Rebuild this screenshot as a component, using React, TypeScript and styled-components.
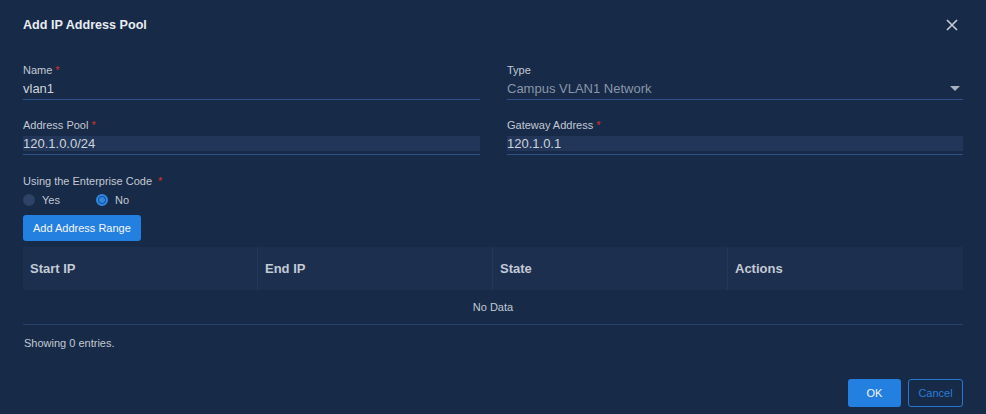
import styled, { createGlobalStyle } from 'styled-components';

const GlobalStyle = createGlobalStyle`
  html, body {
    margin: 0;
    padding: 0;
    background: #172a48;
  }
  body {
    font-family: "Liberation Sans", Arial, sans-serif;
    color: #c9ced8;
  }
`;

const Dialog = styled.div`
  width: 986px;
  height: 414px;
  box-sizing: border-box;
  padding: 0 23px;
  display: flex;
  flex-direction: column;
  background: #172a48;
`;

const Header = styled.div`
  height: 50px;
  display: flex;
  align-items: center;
  justify-content: space-between;
`;

const Title = styled.h2`
  margin: 0;
  font-size: 12.6px;
  font-weight: 700;
  color: #e9edf3;
`;

const CloseBtn = styled.button`
  border: 0;
  background: none;
  padding: 0;
  width: 14px;
  height: 14px;
  margin-right: 4px;
  cursor: pointer;
  display: flex;
  align-items: center;
  justify-content: center;
`;

const FormGrid = styled.div`
  display: grid;
  grid-template-columns: 457px 456px;
  column-gap: 27px;
  row-gap: 19px;
  padding-top: 14px;
`;

const Field = styled.div`
  display: flex;
  flex-direction: column;
`;

const Label = styled.label`
  font-size: 11px;
  line-height: 13px;
  color: #c3c9d3;
  margin-bottom: 4px;
`;

const Req = styled.span`
  color: #d9312b;
  margin-left: 3px;
`;

const InputWrap = styled.div`
  display: flex;
  align-items: center;
  padding-bottom: 3px;
  border-bottom: 1px solid #2e5188;
`;

const Input = styled.div<{ filled?: boolean; dim?: boolean }>`
  flex: 1;
  height: 15px;
  line-height: 15px;
  font-size: 13px;
  color: ${(p) => (p.dim ? '#8a96a9' : '#cfd4dc')};
  background: ${(p) => (p.filled ? '#213659' : 'transparent')};
`;

const Caret = styled.span`
  width: 0;
  height: 0;
  border-left: 5px solid transparent;
  border-right: 5px solid transparent;
  border-top: 5px solid #a9b2c1;
  margin-right: 3px;
`;

const RadioBlock = styled.div`
  margin-top: 20px;
  display: flex;
  flex-direction: column;
`;

const RadioRow = styled.div`
  display: flex;
  gap: 36px;
  margin-top: 2px;
`;

const RadioItem = styled.label`
  display: flex;
  align-items: center;
  gap: 7px;
  font-size: 11px;
  color: #c3c9d3;
`;

const RadioDot = styled.span<{ checked?: boolean }>`
  width: 12px;
  height: 12px;
  box-sizing: border-box;
  border-radius: 50%;
  background: ${(p) => (p.checked ? '#1a4f8f' : '#2c4266')};
  border: ${(p) => (p.checked ? '2px solid #3288e4' : 'none')};
  display: flex;
  align-items: center;
  justify-content: center;
  &::after {
    content: '';
    display: ${(p) => (p.checked ? 'block' : 'none')};
    width: 6px;
    height: 6px;
    border-radius: 50%;
    background: #2f86e3;
  }
`;

const PrimaryBtn = styled.button`
  align-self: flex-start;
  margin-top: 9px;
  height: 26px;
  padding: 0 10px;
  border: 0;
  border-radius: 3px;
  background: #2480e0;
  color: #f3f7fc;
  font-family: inherit;
  font-size: 11px;
  cursor: pointer;
`;

const Table = styled.div`
  margin-top: 6px;
  display: flex;
  flex-direction: column;
`;

const HeadRow = styled.div`
  display: grid;
  grid-template-columns: repeat(4, 1fr);
  height: 43px;
  background: #1c2f4f;
`;

const HeadCell = styled.div<{ last?: boolean }>`
  display: flex;
  align-items: center;
  padding-left: 7px;
  font-size: 13px;
  font-weight: 700;
  color: #c3cad6;
  border-right: ${(p) => (p.last ? 'none' : '1px solid #22375a')};
`;

const EmptyRow = styled.div`
  height: 34px;
  display: flex;
  align-items: center;
  justify-content: center;
  font-size: 11px;
  color: #c3c9d3;
  border-bottom: 1px solid #27436c;
`;

const Summary = styled.div`
  margin-top: 12px;
  padding-left: 1px;
  font-size: 11px;
  color: #c3c9d3;
`;

const Footer = styled.div`
  margin-top: auto;
  margin-bottom: 7px;
  display: flex;
  justify-content: flex-end;
  gap: 7px;
`;

const FooterBtn = styled.button<{ outline?: boolean }>`
  height: 28px;
  min-width: ${(p) => (p.outline ? '55px' : '53px')};
  box-sizing: border-box;
  border-radius: 3px;
  font-family: inherit;
  font-size: 11px;
  cursor: pointer;
  background: ${(p) => (p.outline ? 'transparent' : '#2480e0')};
  color: ${(p) => (p.outline ? '#2a7ed8' : '#f3f7fc')};
  border: ${(p) => (p.outline ? '1px solid #2677d2' : '0')};
`;

const columns = ['Start IP', 'End IP', 'State', 'Actions'];

export default function App() {
  return (
    <>
      <GlobalStyle />
      <Dialog>
        <Header>
          <Title>Add IP Address Pool</Title>
          <CloseBtn aria-label="close">
            <svg width="12" height="12" viewBox="0 0 12 12">
              <path d="M1 1L11 11M11 1L1 11" stroke="#c8cdd6" strokeWidth="1.6" />
            </svg>
          </CloseBtn>
        </Header>

        <FormGrid>
          <Field>
            <Label>
              Name<Req>*</Req>
            </Label>
            <InputWrap>
              <Input>vlan1</Input>
            </InputWrap>
          </Field>
          <Field>
            <Label>Type</Label>
            <InputWrap>
              <Input dim>Campus VLAN1 Network</Input>
              <Caret />
            </InputWrap>
          </Field>
          <Field>
            <Label>
              Address Pool<Req>*</Req>
            </Label>
            <InputWrap>
              <Input filled>120.1.0.0/24</Input>
            </InputWrap>
          </Field>
          <Field>
            <Label>
              Gateway Address<Req>*</Req>
            </Label>
            <InputWrap>
              <Input filled>120.1.0.1</Input>
            </InputWrap>
          </Field>
        </FormGrid>

        <RadioBlock>
          <Label>
            Using the Enterprise Code <Req>*</Req>
          </Label>
          <RadioRow>
            <RadioItem>
              <RadioDot />
              Yes
            </RadioItem>
            <RadioItem>
              <RadioDot checked />
              No
            </RadioItem>
          </RadioRow>
        </RadioBlock>

        <PrimaryBtn>Add Address Range</PrimaryBtn>

        <Table>
          <HeadRow>
            {columns.map((c, i) => (
              <HeadCell key={c} last={i === columns.length - 1}>
                {c}
              </HeadCell>
            ))}
          </HeadRow>
          <EmptyRow>No Data</EmptyRow>
        </Table>

        <Summary>Showing 0 entries.</Summary>

        <Footer>
          <FooterBtn>OK</FooterBtn>
          <FooterBtn outline>Cancel</FooterBtn>
        </Footer>
      </Dialog>
    </>
  );
}
